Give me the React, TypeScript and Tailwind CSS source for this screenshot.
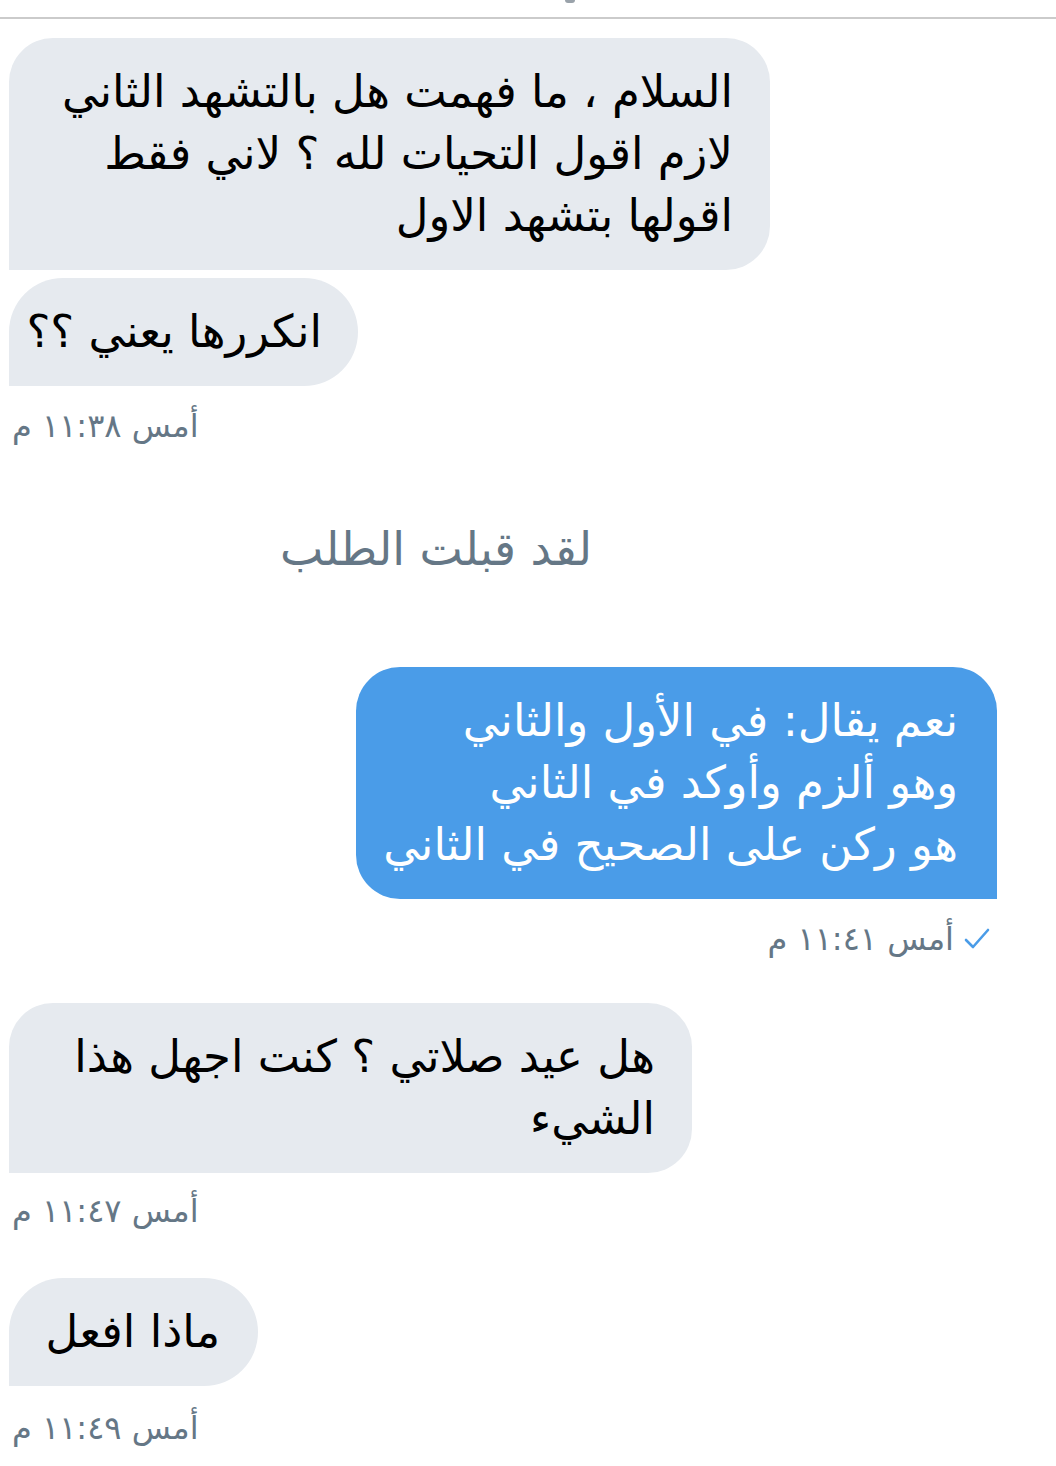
import React from "react";

const font = { fontFamily: '"DejaVu Sans", "Noto Sans", sans-serif' };

function Received({ w, children }: { w: string; children: React.ReactNode }) {
  return (
    <div
      dir="rtl"
      className={`${w} ml-[9px] self-start rounded-t-[44px] rounded-bl-none rounded-br-[44px] bg-[#e6eaef] py-[23px] pr-[37px] text-right text-[45px] leading-[62px] whitespace-nowrap text-black`}
    >
      {children}
    </div>
  );
}

function Stamp({ text, mt }: { text: string; mt: string }) {
  return (
    <div dir="rtl" className={`${mt} ml-[12px] self-start h-[40px] text-[32px] leading-[40px] text-[#657786]`}>
      {text}
    </div>
  );
}

export default function App() {
  return (
    <div className="w-[1056px] h-[1466px] overflow-hidden bg-white" style={font}>
      <div className="h-[17px] flex justify-center">
        <div className="ml-[84px] mt-0 h-[3px] w-[10px] rounded-b bg-[#9aa2aa]" />
      </div>
      <div className="h-[2px] bg-[#cbcbcb]" />
      <div className="flex flex-col">
        <div className="h-[19px]" />
        <Received w="w-[761px]">
          السلام ، ما فهمت هل بالتشهد الثاني
          <br />
          لازم اقول التحيات لله ؟ لاني فقط
          <br />
          اقولها بتشهد الاول
        </Received>
        <div className="h-[8px]" />
        <div
          dir="rtl"
          className="w-[349px] ml-[9px] self-start rounded-t-[55px] rounded-bl-none rounded-br-[55px] bg-[#e6eaef] py-[23px] pr-[36px] text-right text-[45px] leading-[62px] whitespace-nowrap text-black"
        >
          انكررها يعني ؟؟
        </div>
        <Stamp text="أمس ١١:٣٨ م" mt="mt-[20px]" />

        <div dir="rtl" className="mt-[73px] h-[60px] w-[872px] text-center text-[46px] leading-[60px] text-[#657786]">
          لقد قبلت الطلب
        </div>

        <div
          dir="rtl"
          className="mt-[88px] mr-[59px] self-end w-[641px] rounded-t-[44px] rounded-bl-[44px] rounded-br-none bg-[#4a9ce8] py-[23px] pr-[39px] text-right text-[45px] leading-[62px] whitespace-nowrap text-white"
        >
          نعم يقال: في الأول والثاني
          <br />
          وهو ألزم وأوكد في الثاني
          <br />
          هو ركن على الصحيح في الثاني
        </div>
        <div dir="rtl" className="mt-[20px] mr-[66px] self-end flex items-center gap-[10px] h-[40px] text-[32px] leading-[40px] text-[#657786]">
          <svg width="26" height="24" viewBox="0 0 26 24" fill="none">
            <path d="M2 13 L9 20 L24 3" stroke="#4a9ce8" strokeWidth="2.6" strokeLinecap="round" strokeLinejoin="round" />
          </svg>
          <span>أمس ١١:٤١ م</span>
        </div>

        <div className="h-[44px]" />
        <Received w="w-[683px]">
          هل عيد صلاتي ؟ كنت اجهل هذا
          <br />
          الشيء
        </Received>
        <Stamp text="أمس ١١:٤٧ م" mt="mt-[18px]" />

        <div className="h-[47px]" />
        <div
          dir="rtl"
          className="w-[249px] ml-[9px] self-start rounded-t-[55px] rounded-bl-none rounded-br-[55px] bg-[#e6eaef] py-[23px] pr-[38px] text-right text-[45px] leading-[62px] whitespace-nowrap text-black"
        >
          ماذا افعل
        </div>
        <Stamp text="أمس ١١:٤٩ م" mt="mt-[22px]" />
      </div>
    </div>
  );
}
